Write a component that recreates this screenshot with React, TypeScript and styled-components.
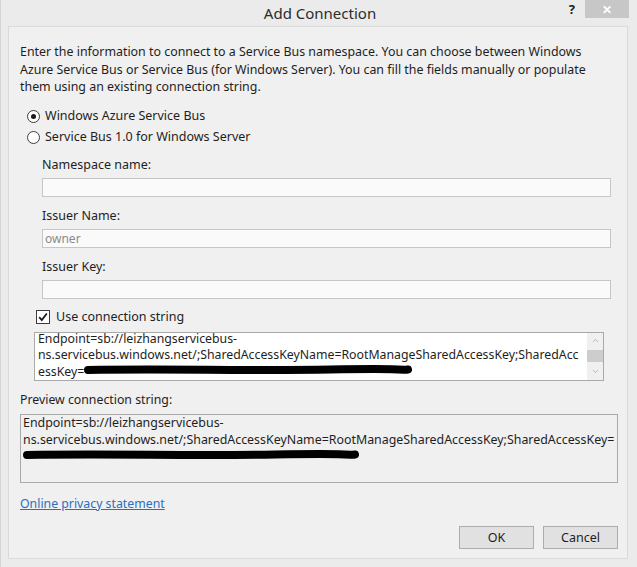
import React from 'react';
import styled, { createGlobalStyle } from 'styled-components';
import { ChevronUp, ChevronDown } from 'lucide-react';

const GlobalStyle = createGlobalStyle`
    html, body {
        margin: 0;
        padding: 0;
        background: #e9e9e9;
    }
    body {
        font-family: "Noto Sans", "Open Sans", sans-serif;
        font-size: 12px;
        color: #1e1e1e;
    }
`;

const Window = styled.div`
    width: 637px;
    height: 567px;
    box-sizing: border-box;
    background: #ebebeb;
    display: flex;
    flex-direction: column;
    padding: 0 9px 10px 7px;
    border-left: 1px solid #d4d4d4;
`;

const TitleBar = styled.div`
    height: 28px;
    display: grid;
    grid-template-columns: 1fr auto 1fr;
    align-items: start;
`;

const Title = styled.div`
    grid-column: 2;
    font-size: 15px;
    line-height: 26px;
    color: #2b2b2b;
    padding-left: 4px;
`;

const TitleControls = styled.div`
    grid-column: 3;
    justify-self: end;
    display: flex;
    align-items: flex-start;
    margin-right: -1px;
`;

const HelpGlyph = styled.span`
    font-size: 13px;
    font-weight: bold;
    line-height: 18px;
    color: #222;
    margin-right: 10px;
`;

const CloseButton = styled.div`
    width: 44px;
    height: 18px;
    background: #c7c7c7;
    color: #fff;
    display: flex;
    align-items: center;
    justify-content: center;
    font-size: 12px;
    font-weight: bold;
`;

const Panel = styled.div`
    flex: 1;
    background: #f0f0f0;
    border: 1px solid #dadada;
    padding: 16px 9px 9px 11px;
    display: flex;
    flex-direction: column;
`;

const Intro = styled.p`
    margin: 0 0 10px;
    font-size: 12.4px;
    line-height: 17.5px;
    white-space: nowrap;
`;

const OptionRow = styled.label`
    display: flex;
    align-items: center;
    height: 21px;
    padding-left: 7px;
    gap: 5px;
    font-size: 12.5px;
    line-height: 18px;
`;

const Radio = styled.span<{ checked?: boolean }>`
    width: 11px;
    height: 11px;
    border-radius: 50%;
    border: 1px solid #3c3c3c;
    background: #fff;
    display: flex;
    align-items: center;
    justify-content: center;
    &::after {
        content: '';
        width: 5px;
        height: 5px;
        border-radius: 50%;
        background: ${(p) => (p.checked ? '#1a1a1a' : 'transparent')};
    }
`;

const Fields = styled.div`
    padding: 8px 7px 0 22px;
    display: flex;
    flex-direction: column;
`;

const FieldLabel = styled.div`
    line-height: 18px;
    font-size: 12.5px;
    margin-bottom: 4px;
`;

const TextBox = styled.div`
    height: 19px;
    box-sizing: border-box;
    border: 1px solid #c6c6c6;
    background: #fafafa;
    padding: 0 2px;
    line-height: 17px;
    color: #8a8a8a;
    margin-bottom: 10px;
`;

const CheckRow = styled.label`
    display: flex;
    align-items: center;
    gap: 6px;
    height: 18px;
    margin: -1px 0 6px 16px;
    font-size: 12.5px;
`;

const CheckBox = styled.span`
    width: 12px;
    height: 12px;
    border: 1px solid #3c3c3c;
    background: #fff;
    display: flex;
    align-items: center;
    justify-content: center;
`;

const StringArea = styled.div`
    height: 49px;
    box-sizing: border-box;
    margin: 0 14px 10px 14px;
    border: 1px solid #a9a9a9;
    background: #fff;
    display: flex;
`;

const StringText = styled.div`
    flex: 1;
    padding: 0 0 0 3px;
    margin-top: -2px;
    font-size: 12.3px;
    line-height: 16.5px;
    white-space: nowrap;
`;

const ScrollBar = styled.div`
    width: 16px;
    background: #f0f0f0;
    display: flex;
    flex-direction: column;
    align-items: center;
    color: #a6a6a6;
`;

const ScrollArrow = styled.div`
    height: 16px;
    display: flex;
    align-items: center;
    justify-content: center;
`;

const ScrollThumb = styled.div`
    width: 16px;
    height: 12px;
    background: #cdcdcd;
    margin: 1px 0 auto;
`;

const SectionLabel = styled.div`
    line-height: 18px;
    font-size: 12.3px;
    margin-bottom: 5px;
`;

const PreviewBox = styled.div`
    height: 69px;
    box-sizing: border-box;
    border: 1px solid #a9a9a9;
`;

const PreviewText = styled.div`
    margin-top: -1px;
    padding-left: 2px;
    font-size: 12.4px;
    line-height: 17px;
    white-space: nowrap;
`;

const Link = styled.a`
    display: inline-block;
    margin-top: 12px;
    line-height: 18px;
    font-size: 12.3px;
    color: #2a6fc0;
    text-decoration: underline;
    align-self: flex-start;
`;

const ButtonRow = styled.div`
    display: flex;
    justify-content: flex-end;
    gap: 9px;
    margin-top: 13px;
`;

const Button = styled.button`
    width: 75px;
    height: 23px;
    border: 1px solid #adadad;
    background: #e1e1e1;
    font-family: inherit;
    font-size: 12.5px;
    color: #1e1e1e;
    padding: 0;
`;

const Redacted: React.FC<{ width: number }> = ({ width }) => (
    <svg width={width} height={12} style={{ verticalAlign: 0 }}>
        <path
            d={`M4 6 C ${width * 0.25} 4.5, ${width * 0.5} 7, ${width * 0.75} 5.5 S ${width - 10} 6.5, ${width - 4} 5.5`}
            stroke="#000"
            strokeWidth={8}
            strokeLinecap="round"
            fill="none"
        />
    </svg>
);

const App: React.FC = () => (
    <>
        <GlobalStyle />
        <Window>
            <TitleBar>
                <Title>Add Connection</Title>
                <TitleControls>
                    <HelpGlyph>?</HelpGlyph>
                    <CloseButton>✕</CloseButton>
                </TitleControls>
            </TitleBar>
            <Panel>
                <Intro>
                    Enter the information to connect to a Service Bus namespace. You can choose between Windows
                    <br />
                    Azure Service Bus or Service Bus (for Windows Server). You can fill the fields manually or populate
                    <br />
                    them using an existing connection string.
                </Intro>
                <OptionRow>
                    <Radio checked />
                    Windows Azure Service Bus
                </OptionRow>
                <OptionRow>
                    <Radio />
                    Service Bus 1.0 for Windows Server
                </OptionRow>
                <Fields>
                    <FieldLabel>Namespace name:</FieldLabel>
                    <TextBox />
                    <FieldLabel>Issuer Name:</FieldLabel>
                    <TextBox>owner</TextBox>
                    <FieldLabel>Issuer Key:</FieldLabel>
                    <TextBox />
                </Fields>
                <CheckRow>
                    <CheckBox>
                        <svg width="10" height="10" viewBox="0 0 10 10">
                            <path d="M1.2 5.2 L3.8 8 L8.8 1.5" stroke="#1a1a1a" strokeWidth="1.8" fill="none" />
                        </svg>
                    </CheckBox>
                    Use connection string
                </CheckRow>
                <StringArea>
                    <StringText>
                        Endpoint=sb://leizhangservicebus-
                        <br />
                        ns.servicebus.windows.net/;SharedAccessKeyName=RootManageSharedAccessKey;SharedAcc
                        <br />
                        essKey=<Redacted width={328} />
                    </StringText>
                    <ScrollBar>
                        <ScrollArrow>
                            <ChevronUp size={9} strokeWidth={2} />
                        </ScrollArrow>
                        <ScrollThumb />
                        <ScrollArrow>
                            <ChevronDown size={9} strokeWidth={2} />
                        </ScrollArrow>
                    </ScrollBar>
                </StringArea>
                <SectionLabel>Preview connection string:</SectionLabel>
                <PreviewBox>
                    <PreviewText>
                        Endpoint=sb://leizhangservicebus-
                        <br />
                        ns.servicebus.windows.net/;SharedAccessKeyName=RootManageSharedAccessKey;SharedAccessKey=
                        <br />
                        <Redacted width={336} />
                    </PreviewText>
                </PreviewBox>
                <Link href="#">Online privacy statement</Link>
                <ButtonRow>
                    <Button>OK</Button>
                    <Button>Cancel</Button>
                </ButtonRow>
            </Panel>
        </Window>
    </>
);

export default App;
